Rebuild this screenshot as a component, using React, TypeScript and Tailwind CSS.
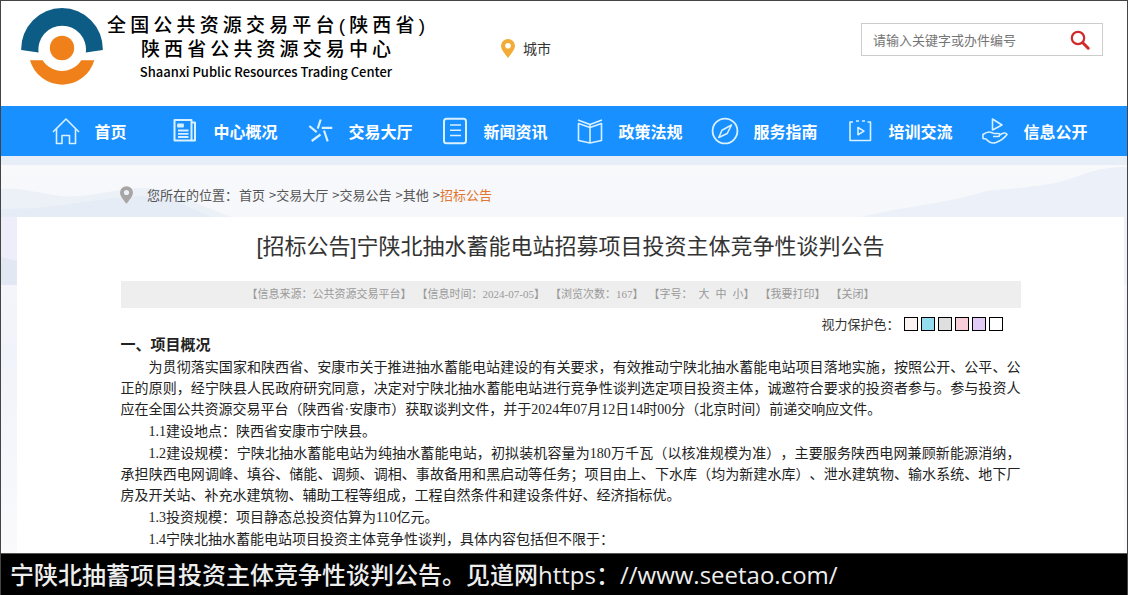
import React, { useState } from "react";

type NavItem = {
  label: string;
  icon: React.ReactNode;
};

const navItems: NavItem[] = [
  {
    label: "首页",
    icon: (
      <>
        <path d="M1 15 14 2l13 13" />
        <path d="M4.5 12v14.5H10v-8h7.5v8h6V12" />
      </>
    ),
  },
  {
    label: "中心概况",
    icon: (
      <>
        <path d="M3.5 3h17v20.5h-17z" strokeWidth="2" />
        <path d="M20.5 5.5H24v18h-3.5" strokeWidth="2" />
        <path
          d="M7 7.5h5v2H7zM7 13.5h10.5M7 16.8h10.5M7 20h10.5"
          strokeWidth="1.8"
        />
      </>
    ),
  },
  {
    label: "交易大厅",
    icon: (
      <path
        d="m14.7 2.5-3 9.2M3.3 9l7.4 6.2M15.7 10.8h10.6M18 13.5l3.7 10.8M14.5 17.5 5.7 24"
        strokeWidth="2.2"
      />
    ),
  },
  {
    label: "新闻资讯",
    icon: (
      <>
        <rect x="3" y="1.8" width="22" height="24.4" rx="2.5" strokeWidth="2" />
        <path d="M9 8h11M9 13.2h11M9 18.5h11" />
      </>
    ),
  },
  {
    label: "政策法规",
    icon: (
      <>
        <path d="m2 3 12 4.5L26 3" />
        <path d="M2.5 6.5v17L14 26l11.5-2.5v-17L14 10.5z" />
        <path d="M14 8v18" />
      </>
    ),
  },
  {
    label: "服务指南",
    icon: (
      <>
        <circle cx="14" cy="14" r="12.4" strokeWidth="1.8" />
        <path d="M20.5 8 11 13.2 7.8 20.5l8.4-4z" />
      </>
    ),
  },
  {
    label: "培训交流",
    icon: (
      <>
        <path d="M7 5H4v18.5h20.5V5h-3M10 4h3M16 4h3" />
        <path d="M12 10.5v7.2l6-3.6z" />
      </>
    ),
  },
  {
    label: "信息公开",
    icon: (
      <>
        <path d="M11.5 2v11L21 8z" />
        <path d="M12 19.5h5c2 0 2.5-3 .5-3h-4c-2 0-3-1.5-5-1.5-3 0-4.5 1-6.5 2.5v4L5 22c3 3.5 7 4.5 10 3.5 4-1.5 8-4 11-8-1.5-2.5-3.5-1.5-7.5.5" />
      </>
    ),
  },
];

const crumbs = ["首页", "交易大厅", "交易公告", "其他"];

const eyeColors = [
  { name: "米色", bg: "bg-[#faf3f1]" },
  { name: "蓝色", bg: "bg-[#94dcf0]" },
  { name: "灰色", bg: "bg-[#dfdfdf]" },
  { name: "粉色", bg: "bg-[#f8cfd8]" },
  { name: "紫色", bg: "bg-[#e3cbf8]" },
  { name: "白色", bg: "bg-white" },
];

const paragraphs = [
  "为贯彻落实国家和陕西省、安康市关于推进抽水蓄能电站建设的有关要求，有效推动宁陕北抽水蓄能电站项目落地实施，按照公开、公平、公正的原则，经宁陕县人民政府研究同意，决定对宁陕北抽水蓄能电站进行竞争性谈判选定项目投资主体，诚邀符合要求的投资者参与。参与投资人应在全国公共资源交易平台（陕西省·安康市）获取谈判文件，并于2024年07月12日14时00分（北京时间）前递交响应文件。",
  "1.1建设地点：陕西省安康市宁陕县。",
  "1.2建设规模：宁陕北抽水蓄能电站为纯抽水蓄能电站，初拟装机容量为180万千瓦（以核准规模为准），主要服务陕西电网兼顾新能源消纳，承担陕西电网调峰、填谷、储能、调频、调相、事故备用和黑启动等任务；项目由上、下水库（均为新建水库）、泄水建筑物、输水系统、地下厂房及开关站、补充水建筑物、辅助工程等组成，工程自然条件和建设条件好、经济指标优。",
  "1.3投资规模：项目静态总投资估算为110亿元。",
  "1.4宁陕北抽水蓄能电站项目投资主体竞争性谈判，具体内容包括但不限于：",
];

function Pin({ className }: { className: string }) {
  return (
    <svg viewBox="0 0 14 19" className={className} fill="currentColor">
      <path
        fillRule="evenodd"
        d="M7 0a7 7 0 0 1 7 7c0 3.5-4 8-7 12C4 15 0 10.5 0 7a7 7 0 0 1 7-7Zm0 4a2.8 2.8 0 1 0 0 5.6A2.8 2.8 0 0 0 7 4Z"
      />
    </svg>
  );
}

function Logo() {
  return (
    <svg viewBox="0 0 82 78" className="h-[78px] w-[82px] shrink-0">
      <path
        fill="#0d5c86"
        d="M.2 42A41 41 0 0 1 41 0a41 41 0 0 1 40.8 42l-17 2.6A23.8 23.8 0 1 0 17.6 44.6z"
      />
      <circle cx="41" cy="40" r="12.2" fill="#f08019" />
      <path
        fill="#f08019"
        d="M9 52.3h12.7a22.8 22.8 0 0 0 38.6 0h13A33.4 33.4 0 0 1 9 52.3z"
      />
    </svg>
  );
}

function Header() {
  const [keyword, setKeyword] = useState<string>("");

  return (
    <header className="flex h-[105px] items-start bg-white pl-5 pr-6">
      <a href="#" className="flex items-start gap-1 pt-[7px] text-black">
        <Logo />
        <div className="flex flex-col items-center pt-[6px] font-medium">
          <div className="flex flex-col items-center text-[19px] leading-6 font-['Liberation_Sans','Noto_Sans_CJK_SC',sans-serif]">
            <span className="w-[318px] [text-align-last:justify]">
              全国公共资源交易平台(陕西省)
            </span>
            <span className="w-[250px] [text-align-last:justify]">
              陕西省公共资源交易中心
            </span>
          </div>
          <span className="text-[13px] leading-5">
            Shaanxi Public Resources Trading Center
          </span>
        </div>
      </a>
      <button className="ml-[76px] flex items-center gap-2 pt-[37px] text-sm text-[#333]">
        <Pin className="h-[19px] w-[14px] text-[#f3ab37]" />
        城市
      </button>
      <form
        onSubmit={(e) => e.preventDefault()}
        className="ml-auto mt-[22px] flex h-[33px] w-[242px] items-center border border-[#ccc] pl-[11px] pr-3"
      >
        <input
          type="text"
          aria-label="搜索"
          value={keyword}
          onChange={(e) => setKeyword(e.target.value)}
          placeholder="请输入关键字或办件编号"
          className="min-w-0 flex-1 text-[13px] text-[#333] outline-none placeholder:text-[#757575]"
        />
        <button type="submit" aria-label="搜索">
          <svg
            viewBox="0 0 20 20"
            className="h-5 w-5"
            fill="none"
            stroke="#d12a2a"
            strokeLinecap="round"
          >
            <circle cx="8" cy="8" r="6.2" strokeWidth="2.2" />
            <path d="m12.8 12.8 5.4 5.4" strokeWidth="3" />
          </svg>
        </button>
      </form>
    </header>
  );
}

function Nav() {
  return (
    <nav className="grid h-[50px] grid-cols-8 bg-[#1890ff] pl-[21px] pr-[25px]">
      {navItems.map((item) => (
        <a
          key={item.label}
          href="#"
          className="flex items-center justify-center gap-[14px] whitespace-nowrap text-base font-bold text-white"
        >
          <svg
            viewBox="0 0 28 28"
            className="h-7 w-7 shrink-0"
            fill="none"
            stroke="#d8f0ff"
            strokeWidth="1.6"
            strokeLinejoin="round"
          >
            {item.icon}
          </svg>
          {item.label}
        </a>
      ))}
    </nav>
  );
}

function Breadcrumb() {
  return (
    <div className="flex h-[61px] items-center pl-[119px] pt-4 text-[13px] text-[#555]">
      <Pin className="mr-[14px] h-[18px] w-[13px] text-[#a8a5a5]" />
      <span className="mr-[1px]">您所在的位置：</span>
      {crumbs.map((name) => (
        <React.Fragment key={name}>
          <a href="#">{name}</a>
          <span className="ml-1">&gt;</span>
        </React.Fragment>
      ))}
      <a href="#" className="text-[#e2762e]">
        招标公告
      </a>
    </div>
  );
}

// pale hills behind the breadcrumb and the card edges
function Backdrop() {
  return (
    <div className="absolute inset-0 -z-10 bg-linear-to-b from-[#f8f9fb] via-[#f1f3fa] to-[#fafafc]">
      <div className="h-[9px] bg-[#e8eef7]" />
      <svg
        viewBox="0 0 1126 120"
        preserveAspectRatio="none"
        className="h-[120px] w-full"
      >
        <path
          fill="#ecf1f8"
          d="M0 24c30-2 50 10 80 7 40-5 60-12 80-6 30 8 50 22 85 31L190 56 0 90z"
        />
        <path fill="#e6ecf6" d="M0 44c40 0 60-4 90-8s60-8 80-2l40 18v6H0z" />
        <path fill="#eeeefa" d="M0 52h20v45H0z" />
        <path fill="#e1e8f4" d="M0 92l20 5v23H0z" />
        <path
          fill="#ecf0f8"
          d="M860 52c50-12 90-14 125-26 40-4 60-4 90-14 20-8 35-10 51-10v118H860z"
        />
      </svg>
    </div>
  );
}

function Article() {
  const [bg, setBg] = useState<string>("bg-white");

  return (
    <main className={`ml-4 mr-[3px] flex-1 pb-[3px] pt-[14px] ${bg}`}>
      <div className="mx-auto max-w-[900px]">
        <h1 className="text-center text-[22px] leading-8 text-[#333] font-['Liberation_Sans','Noto_Sans_CJK_SC',sans-serif]">
          [招标公告]宁陕北抽水蓄能电站招募项目投资主体竞争性谈判公告
        </h1>
        <div className="mt-[18px] flex h-[27px] items-center justify-center gap-[5px] whitespace-nowrap bg-[#eee] pr-5 text-[11px] text-[#999] [text-spacing-trim:space-all] font-['Liberation_Serif','Noto_Sans_CJK_SC',sans-serif]">
          <span>【信息来源：公共资源交易平台】</span>
          <span>【信息时间：2024-07-05】</span>
          <span>【浏览次数：167】</span>
          <span className="flex">
            【字号：
            <span className="flex gap-[6px] pl-[6px]">
              <button>大</button>
              <button>中</button>
              <button>小</button>
            </span>
            】
          </span>
          <button>【我要打印】</button>
          <button>【关闭】</button>
        </div>
        <div className="mt-[5px] flex h-[22px] items-center justify-end gap-[3px] pr-[18px] text-[13px] text-[#333]">
          <span className="mr-[1px]">视力保护色：</span>
          {eyeColors.map((c) => (
            <button
              key={c.name}
              aria-label={c.name}
              onClick={() => setBg(c.bg)}
              className={`h-[14px] w-[14px] border border-black ${c.bg}`}
            />
          ))}
        </div>
        <div className="flex flex-col gap-px text-sm leading-[21px] text-[#222] [text-spacing-trim:space-all] font-['Liberation_Serif','Noto_Sans_CJK_SC',sans-serif]">
          <h2 className="text-[15px] leading-[21px] font-bold">一、项目概况</h2>
          {paragraphs.map((text) => (
            <p key={text} className="text-justify indent-7">
              {text}
            </p>
          ))}
        </div>
      </div>
    </main>
  );
}

function App() {
  return (
    <div className="flex min-h-screen flex-col border border-[#444] bg-white font-['Noto_Sans_CJK_SC',sans-serif]">
      <Header />
      <Nav />
      <div className="relative isolate flex flex-1 flex-col">
        <Backdrop />
        <Breadcrumb />
        <Article />
      </div>
      <footer className="border-t border-[#555] bg-black pl-[9px] text-2xl font-medium leading-[41px] text-[#eee] font-['Open_Sans','Noto_Sans_CJK_SC',sans-serif]">
        宁陕北抽蓄项目投资主体竞争性谈判公告。见道网https：//www.seetao.com/
      </footer>
    </div>
  );
}

export default App;
